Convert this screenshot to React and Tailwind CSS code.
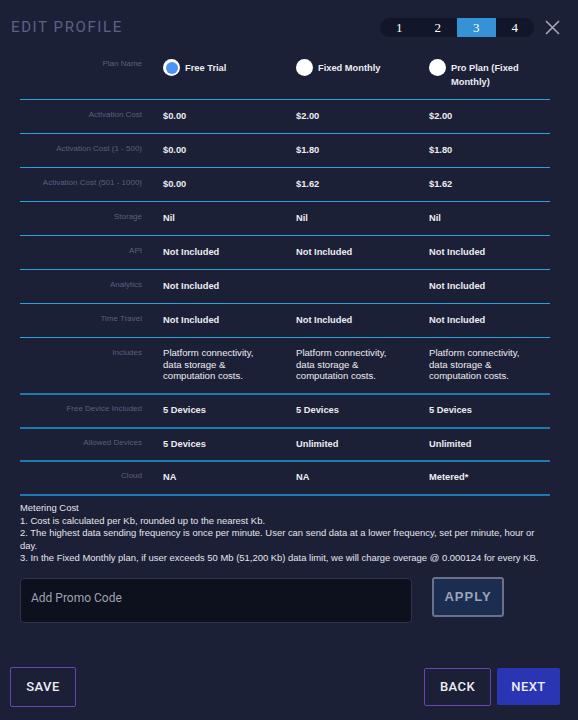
import React from "react";

const rowsA = [
  ["Activation Cost", "$0.00", "$2.00", "$2.00"],
  ["Activation Cost (1 - 500)", "$0.00", "$1.80", "$1.80"],
  ["Activation Cost (501 - 1000)", "$0.00", "$1.62", "$1.62"],
  ["Storage", "Nil", "Nil", "Nil"],
  ["API", "Not Included", "Not Included", "Not Included"],
  ["Analytics", "Not Included", "", "Not Included"],
  ["Time Travel", "Not Included", "Not Included", "Not Included"],
];

const rowsB = [
  ["Free Device Included", "5 Devices", "5 Devices", "5 Devices", "h-[34px]"],
  ["Allowed Devices", "5 Devices", "Unlimited", "Unlimited", "h-[33px]"],
  ["Cloud", "NA", "NA", "Metered*", "h-[34px]"],
];

function Radio({ selected, label }) {
  return (
    <div className="flex items-start gap-[5px]">
      {selected ? (
        <div className="w-[17px] h-[17px] shrink-0 rounded-full bg-white flex items-center justify-center">
          <div className="w-[12px] h-[12px] rounded-full bg-[#4b93f4]" />
        </div>
      ) : (
        <div className="w-[17px] h-[17px] shrink-0 rounded-full bg-white" />
      )}
      <div className="pt-[2px] text-[9.3px] leading-[14px] font-bold text-[#ececf2]">{label}</div>
    </div>
  );
}

function Label({ children, pt = "pt-[10px]" }) {
  return (
    <div className={`w-[143px] shrink-0 pr-[21px] text-right text-[8px] leading-[10px] text-[#5a5f80] ${pt}`}>
      {children}
    </div>
  );
}

export default function App() {
  return (
    <div
      className="w-[578px] h-[720px] bg-[#1c2036] flex flex-col overflow-hidden"
      style={{ fontFamily: '"Liberation Sans", Arial, sans-serif' }}
    >
      {/* Header */}
      <div className="h-[55px] shrink-0 flex items-center pl-[11px] pr-[18px]">
        <div
          className="text-[15px] tracking-[1.6px] text-[#5c6186]"
          style={{ fontFamily: 'Roboto, "Liberation Sans", sans-serif' }}
        >
          EDIT PROFILE
        </div>
        <div
          className="ml-auto flex h-[19px] w-[154px] rounded-full bg-[#12162a] overflow-hidden text-[13px] text-white"
          style={{ fontFamily: '"Liberation Serif", "Times New Roman", serif' }}
        >
          <div className="w-[38.5px] flex items-center justify-center">1</div>
          <div className="w-[38.5px] flex items-center justify-center">2</div>
          <div className="w-[38.5px] flex items-center justify-center bg-[#3592d6]">3</div>
          <div className="w-[38.5px] flex items-center justify-center">4</div>
        </div>
        <svg className="ml-[11px]" width="15" height="15" viewBox="0 0 15 15">
          <path d="M1 1 L14 14 M14 1 L1 14" stroke="#a4a8ba" strokeWidth="1.6" fill="none" />
        </svg>
      </div>

      {/* Table */}
      <div className="pl-[20px] pr-[28px]">
        <div className="flex h-[45px] border-b border-[#29a3dd]">
          <Label pt="pt-[4px]">Plan Name</Label>
          <div className="w-[133px] shrink-0 pt-[4px]">
            <Radio selected label="Free Trial" />
          </div>
          <div className="w-[133px] shrink-0 pt-[4px]">
            <Radio label="Fixed Monthly" />
          </div>
          <div className="flex-1 pt-[4px]">
            <Radio label="Pro Plan (Fixed Monthly)" />
          </div>
        </div>

        {rowsA.map((r) => (
          <div key={r[0]} className="flex h-[34px] border-b border-[#29a3dd]">
            <Label>{r[0]}</Label>
            {[r[1], r[2], r[3]].map((v, i) => (
              <div
                key={i}
                className={`${i < 2 ? "w-[133px] shrink-0" : "flex-1"} pt-[10px] text-[9.3px] leading-[12px] font-bold text-[#ececf2]`}
              >
                {v}
              </div>
            ))}
          </div>
        ))}

        <div className="flex h-[57px] border-b-2 border-[#1f79b0]">
          <Label pt="pt-[10px]">Includes</Label>
          {[0, 1, 2].map((i) => (
            <div
              key={i}
              className={`${i < 2 ? "w-[133px] shrink-0" : "flex-1"} pt-[9px] text-[9.6px] leading-[11.5px] text-[#ececf2]`}
            >
              <span className="block">Platform connectivity,</span>
              <span className="block">data storage &amp;</span>
              <span className="block">computation costs.</span>
            </div>
          ))}
        </div>

        {rowsB.map((r) => (
          <div key={r[0]} className={`flex ${r[4]} border-b-2 border-[#1f79b0]`}>
            <Label pt="pt-[9px]">{r[0]}</Label>
            {[r[1], r[2], r[3]].map((v, i) => (
              <div
                key={i}
                className={`${i < 2 ? "w-[133px] shrink-0" : "flex-1"} pt-[8.5px] text-[9.3px] leading-[12px] font-bold text-[#ececf2]`}
              >
                {v}
              </div>
            ))}
          </div>
        ))}
      </div>

      {/* Metering */}
      <div className="pl-[20px] pr-[28px] pt-[6px] text-[9.45px] leading-[12.6px] text-[#e4e4ec]">
        <p>Metering Cost</p>
        <p>1. Cost is calculated per Kb, rounded up to the nearest Kb.</p>
        <p>
          2. The highest data sending frequency is once per minute. User can send data at a lower frequency, set per minute, hour or day.
        </p>
        <p>3. In the Fixed Monthly plan, if user exceeds 50 Mb (51,200 Kb) data limit, we will charge overage @ 0.000124 for every KB.</p>
      </div>

      {/* Promo */}
      <div className="flex items-start gap-[20px] pl-[20px] mt-[13px]">
        <div className="w-[392px] h-[45px] rounded-[4px] border border-[#2d3452] bg-[#0d101d] flex items-center pl-[10px] pb-[5px]">
          <span
            className="text-[12px] text-[#9ea2b2]"
            style={{ fontFamily: 'Roboto, "Liberation Sans", sans-serif' }}
          >
            Add Promo Code
          </span>
        </div>
        <div className="-mt-[1px] w-[72px] h-[40px] rounded-[3px] border-2 border-[#6a7188] bg-[#1b2d50] flex items-center justify-center text-[13px] font-bold tracking-[1px] text-[#9aa3b8]">
          APPLY
        </div>
      </div>

      {/* Footer */}
      <div
        className="mt-auto pb-[13px] pl-[10px] pr-[18px] flex items-start justify-between text-[13px] font-medium tracking-[0.4px] text-[#eceef5]"
        style={{ fontFamily: 'Roboto, "Liberation Sans", sans-serif' }}
      >
        <div className="w-[66px] h-[40px] rounded-[2px] border border-[#6a44b0] flex items-center justify-center">
          SAVE
        </div>
        <div className="flex gap-[6px] mt-[1px]">
          <div className="w-[67px] h-[38px] rounded-[2px] border border-[#6a44b0] flex items-center justify-center">
            BACK
          </div>
          <div className="w-[63px] h-[37px] rounded-[2px] bg-[#2a35b3] flex items-center justify-center">
            NEXT
          </div>
        </div>
      </div>
    </div>
  );
}
